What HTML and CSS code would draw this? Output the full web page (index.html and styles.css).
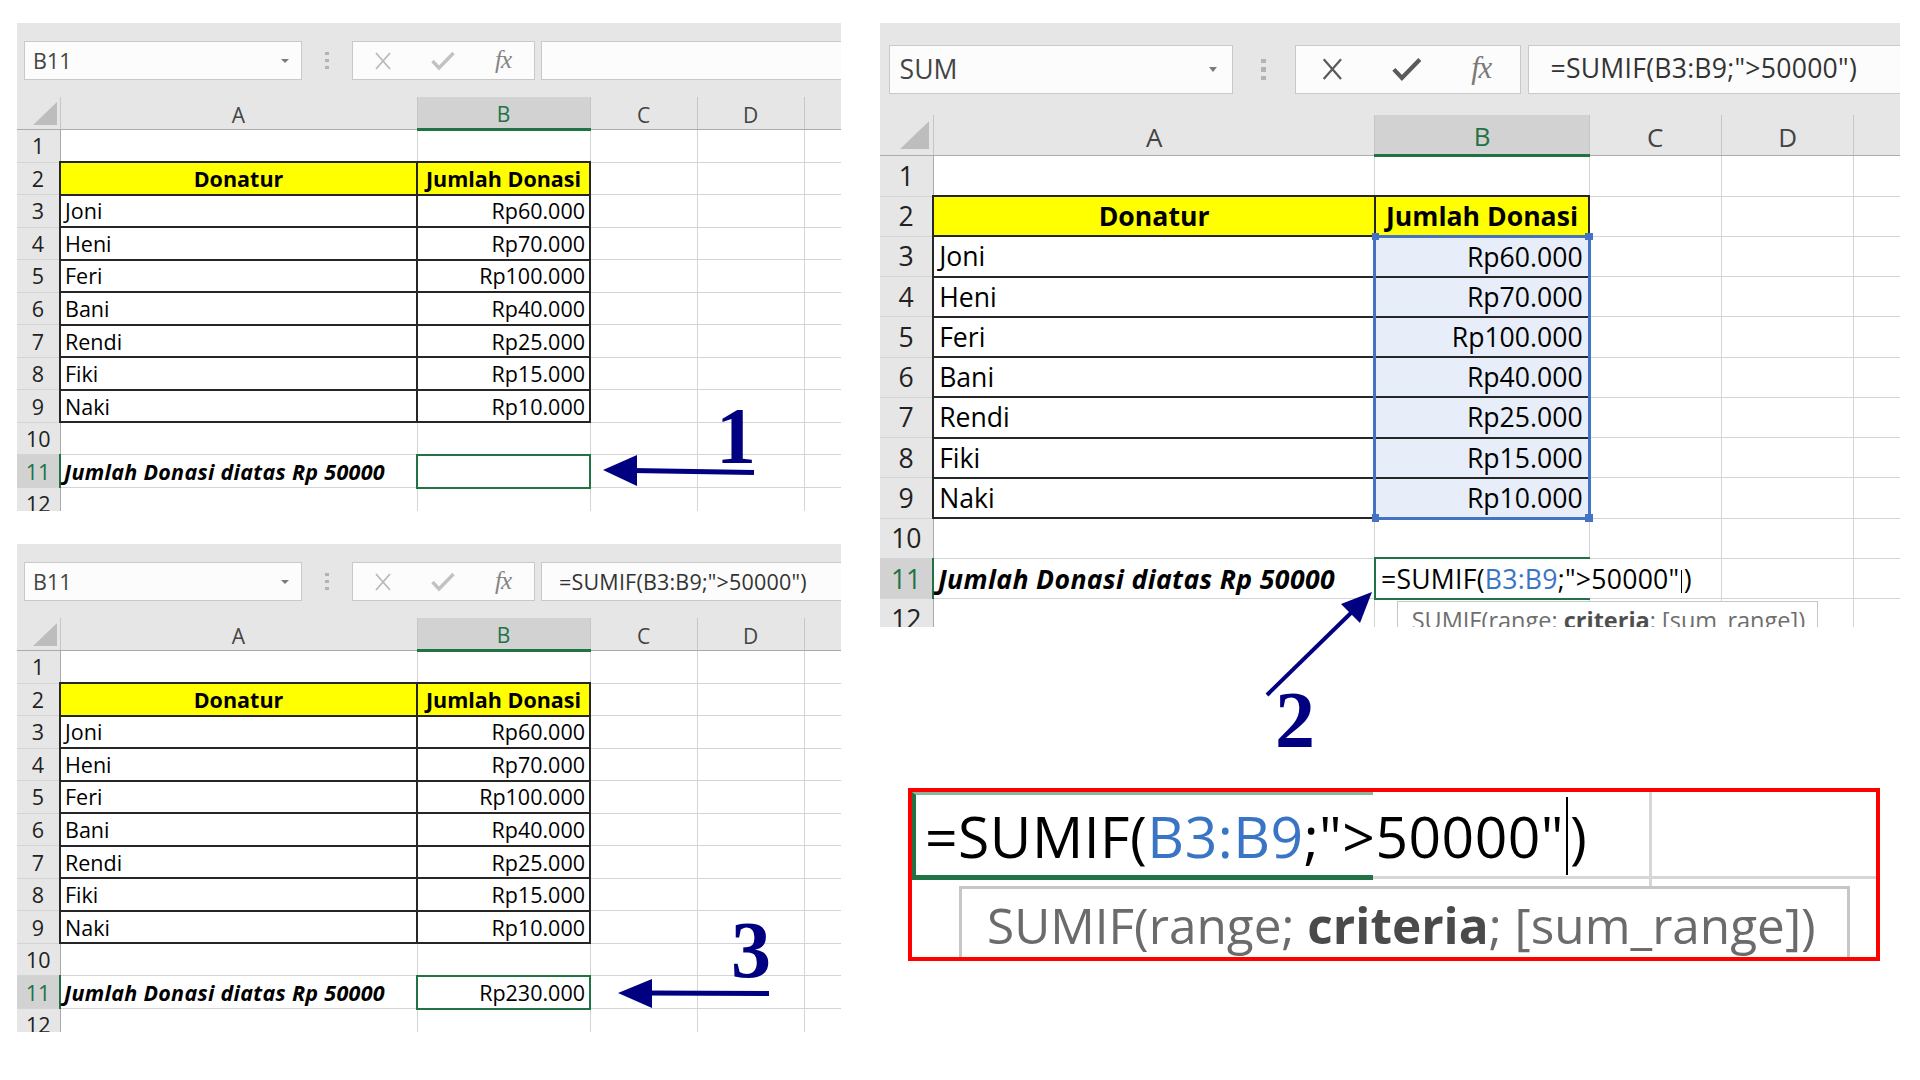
FILE: index.html
```html
<!DOCTYPE html>
<html lang="id">
<head>
<meta charset="utf-8">
<title>SUMIF Excel</title>
<link rel="stylesheet" href="styles.css">
</head>
<body>
<div class="page">
  <div class="col-left">
    <!-- Panel 1 -->
    <div class="sheet">
      <div class="toolbar">
        <div class="namebox"><span>B11</span><i class="dd"></i></div>
        <div class="sep"><i></i><i></i><i></i></div>
        <div class="fxbox">
          <span class="ic"><svg class="x" width="20" height="18" viewBox="0 0 20 18"><path d="M3 1L17 17M17 1L3 17"/></svg></span>
          <span class="ic"><svg class="ok" width="24" height="20" viewBox="0 0 24 20"><path d="M1.5 10L8 17L22.5 2"/></svg></span>
          <span class="ic fx">fx</span>
        </div>
        <div class="fbar"></div>
      </div>
      <table class="grid">
        <colgroup><col class="c0"><col class="ca"><col class="cb"><col class="cc"><col class="cd"><col class="ce"></colgroup>
        <tr class="hd"><th class="corner"><i></i></th><th>A</th><th class="on">B</th><th>C</th><th>D</th><th></th></tr>
        <tr class="r"><th class="rh">1</th><td></td><td></td><td></td><td></td><td></td></tr>
        <tr class="r"><th class="rh">2</th><td class="t y">Donatur</td><td class="t y">Jumlah Donasi</td><td></td><td></td><td></td></tr>
        <tr class="r"><th class="rh">3</th><td class="t">Joni</td><td class="t n">Rp60.000</td><td></td><td></td><td></td></tr>
        <tr class="r"><th class="rh">4</th><td class="t">Heni</td><td class="t n">Rp70.000</td><td></td><td></td><td></td></tr>
        <tr class="r"><th class="rh">5</th><td class="t">Feri</td><td class="t n">Rp100.000</td><td></td><td></td><td></td></tr>
        <tr class="r"><th class="rh">6</th><td class="t">Bani</td><td class="t n">Rp40.000</td><td></td><td></td><td></td></tr>
        <tr class="r"><th class="rh">7</th><td class="t">Rendi</td><td class="t n">Rp25.000</td><td></td><td></td><td></td></tr>
        <tr class="r"><th class="rh">8</th><td class="t">Fiki</td><td class="t n">Rp15.000</td><td></td><td></td><td></td></tr>
        <tr class="r"><th class="rh">9</th><td class="t">Naki</td><td class="t n">Rp10.000</td><td></td><td></td><td></td></tr>
        <tr class="r"><th class="rh">10</th><td></td><td></td><td></td><td></td><td></td></tr>
        <tr class="r"><th class="rh on">11</th><td class="bi">Jumlah Donasi diatas Rp 50000</td><td class="cur n"></td><td></td><td></td><td></td></tr>
        <tr class="r"><th class="rh">12</th><td></td><td></td><td></td><td></td><td></td></tr>
      </table>
    </div>

    <!-- Panel 2 -->
    <div class="sheet">
      <div class="toolbar">
        <div class="namebox"><span>B11</span><i class="dd"></i></div>
        <div class="sep"><i></i><i></i><i></i></div>
        <div class="fxbox">
          <span class="ic"><svg class="x" width="20" height="18" viewBox="0 0 20 18"><path d="M3 1L17 17M17 1L3 17"/></svg></span>
          <span class="ic"><svg class="ok" width="24" height="20" viewBox="0 0 24 20"><path d="M1.5 10L8 17L22.5 2"/></svg></span>
          <span class="ic fx">fx</span>
        </div>
        <div class="fbar">=SUMIF(B3:B9;"&gt;50000")</div>
      </div>
      <table class="grid">
        <colgroup><col class="c0"><col class="ca"><col class="cb"><col class="cc"><col class="cd"><col class="ce"></colgroup>
        <tr class="hd"><th class="corner"><i></i></th><th>A</th><th class="on">B</th><th>C</th><th>D</th><th></th></tr>
        <tr class="r"><th class="rh">1</th><td></td><td></td><td></td><td></td><td></td></tr>
        <tr class="r"><th class="rh">2</th><td class="t y">Donatur</td><td class="t y">Jumlah Donasi</td><td></td><td></td><td></td></tr>
        <tr class="r"><th class="rh">3</th><td class="t">Joni</td><td class="t n">Rp60.000</td><td></td><td></td><td></td></tr>
        <tr class="r"><th class="rh">4</th><td class="t">Heni</td><td class="t n">Rp70.000</td><td></td><td></td><td></td></tr>
        <tr class="r"><th class="rh">5</th><td class="t">Feri</td><td class="t n">Rp100.000</td><td></td><td></td><td></td></tr>
        <tr class="r"><th class="rh">6</th><td class="t">Bani</td><td class="t n">Rp40.000</td><td></td><td></td><td></td></tr>
        <tr class="r"><th class="rh">7</th><td class="t">Rendi</td><td class="t n">Rp25.000</td><td></td><td></td><td></td></tr>
        <tr class="r"><th class="rh">8</th><td class="t">Fiki</td><td class="t n">Rp15.000</td><td></td><td></td><td></td></tr>
        <tr class="r"><th class="rh">9</th><td class="t">Naki</td><td class="t n">Rp10.000</td><td></td><td></td><td></td></tr>
        <tr class="r"><th class="rh">10</th><td></td><td></td><td></td><td></td><td></td></tr>
        <tr class="r"><th class="rh on">11</th><td class="bi">Jumlah Donasi diatas Rp 50000</td><td class="cur n">Rp230.000</td><td></td><td></td><td></td></tr>
        <tr class="r"><th class="rh">12</th><td></td><td></td><td></td><td></td><td></td></tr>
      </table>
    </div>
  </div>

  <div class="col-right">
    <!-- Panel 3 -->
    <div class="sheet big active">
      <div class="toolbar">
        <div class="namebox"><span>SUM</span><i class="dd"></i></div>
        <div class="sep"><i></i><i></i><i></i></div>
        <div class="fxbox">
          <span class="ic"><svg class="x" width="20" height="18" viewBox="0 0 20 18"><path d="M3 1L17 17M17 1L3 17"/></svg></span>
          <span class="ic"><svg class="ok" width="24" height="20" viewBox="0 0 24 20"><path d="M1.5 10L8 17L22.5 2"/></svg></span>
          <span class="ic fx">fx</span>
        </div>
        <div class="fbar">=SUMIF(B3:B9;"&gt;50000")</div>
      </div>
      <table class="grid">
        <colgroup><col class="c0"><col class="ca"><col class="cb"><col class="cc"><col class="cd"><col class="ce"></colgroup>
        <tr class="hd"><th class="corner"><i></i></th><th>A</th><th class="on">B</th><th>C</th><th>D</th><th></th></tr>
        <tr class="r"><th class="rh">1</th><td></td><td></td><td></td><td></td><td></td></tr>
        <tr class="r"><th class="rh">2</th><td class="t y">Donatur</td><td class="t y">Jumlah Donasi</td><td></td><td></td><td></td></tr>
        <tr class="r"><th class="rh">3</th><td class="t">Joni</td><td class="t n sel top">Rp60.000</td><td></td><td></td><td></td></tr>
        <tr class="r"><th class="rh">4</th><td class="t">Heni</td><td class="t n sel">Rp70.000</td><td></td><td></td><td></td></tr>
        <tr class="r"><th class="rh">5</th><td class="t">Feri</td><td class="t n sel">Rp100.000</td><td></td><td></td><td></td></tr>
        <tr class="r"><th class="rh">6</th><td class="t">Bani</td><td class="t n sel">Rp40.000</td><td></td><td></td><td></td></tr>
        <tr class="r"><th class="rh">7</th><td class="t">Rendi</td><td class="t n sel">Rp25.000</td><td></td><td></td><td></td></tr>
        <tr class="r"><th class="rh">8</th><td class="t">Fiki</td><td class="t n sel">Rp15.000</td><td></td><td></td><td></td></tr>
        <tr class="r"><th class="rh">9</th><td class="t">Naki</td><td class="t n sel bot">Rp10.000</td><td></td><td></td><td></td></tr>
        <tr class="r"><th class="rh">10</th><td></td><td></td><td></td><td></td><td></td></tr>
        <tr class="r"><th class="rh on">11</th><td class="bi">Jumlah Donasi diatas Rp 50000</td><td class="edit">=SUMIF(<span class="ref">B3:B9</span>;"&gt;50000"<i class="caret"></i>)<div class="tip">SUMIF(range; <b>criteria</b>; [sum_range])</div></td><td></td><td></td><td></td></tr>
        <tr class="r"><th class="rh">12</th><td></td><td></td><td></td><td></td><td></td></tr>
      </table>
    </div>

    <!-- Magnified view -->
    <div class="zoombox">
      <div class="zrow">
        <div class="zcell">=SUMIF(<span class="ref">B3:B9</span>;"&gt;50000"<i class="zcaret"></i>)</div>
        <div class="zrest"><div class="zgrid"></div></div>
      </div>
      <div class="ztip">SUMIF(range; <b>criteria</b>; [sum_range])</div>
    </div>
  </div>

  <svg class="arrows" width="1920" height="1080" viewBox="0 0 1920 1080">
    <g stroke="#000080" fill="none">
      <line x1="632" y1="470.5" x2="754" y2="472.5" stroke-width="5"/>
      <line x1="648" y1="993" x2="769" y2="993.5" stroke-width="5"/>
      <line x1="1267" y1="695" x2="1354" y2="610" stroke-width="4"/>
    </g>
    <g fill="#000080">
      <polygon points="603,470 637,455 637,486"/>
      <polygon points="618,993 652,979 652,1008"/>
      <polygon points="1372,592 1341,604 1360,623"/>
    </g>
  </svg>
  <span class="num n1">1</span>
  <span class="num n2">2</span>
  <span class="num n3">3</span>
</div>
</body>
</html>
```

FILE: styles.css
```css
* { box-sizing: border-box; }
html, body { margin: 0; padding: 0; background: #fff; }

.page {
  position: relative;
  width: 1920px;
  height: 1080px;
  overflow: hidden;
  display: flex;
  align-items: flex-start;
  gap: 39px;
  padding: 23px 0 0 17px;
  font-family: "Open Sans", "Noto Sans", sans-serif;
  color: #000;
}

.col-left { display: flex; flex-direction: column; gap: 33px; width: 824px; }
.col-right { display: flex; flex-direction: column; width: 1020px; }

/* ---------- sheet panel ---------- */
.sheet { width: 824px; height: 488px; overflow: hidden; background: #fff; }
.sheet.big { zoom: 1.2375; }

.toolbar {
  height: 74px;
  background: #e6e6e6;
  display: flex;
  align-items: flex-start;
  padding: 18px 0 0 7px;
}
.namebox {
  flex: none;
  width: 278px; height: 39px;
  background: #fcfcfc;
  border: 1px solid #c9c9c9;
  display: flex; align-items: center; justify-content: space-between;
  padding: 0 12px 0 8px;
  font-size: 21.5px; color: #444;
}
.dd {
  width: 0; height: 0;
  border-left: 4px solid transparent;
  border-right: 4px solid transparent;
  border-top: 4.5px solid #7a7a7a;
}
.sep {
  flex: none; width: 50px; height: 39px;
  display: flex; flex-direction: column; align-items: center; justify-content: center; gap: 3.5px;
}
.sep i { width: 3.5px; height: 3.5px; background: #b3b3b3; }
.fxbox {
  flex: none;
  width: 183px; height: 39px;
  background: #fcfcfc;
  border: 1px solid #c9c9c9;
  display: flex; align-items: center;
}
.ic { width: 60px; height: 37px; display: flex; align-items: center; justify-content: center; }
.ic svg { fill: none; stroke-linecap: butt; stroke-linejoin: miter; }
.ic .x { stroke: #b9b9b9; stroke-width: 1.8; }
.ic .ok { stroke: #c2c2c2; stroke-width: 3.4; }
.ic.fx {
  font-family: "Liberation Serif", "Times New Roman", serif;
  font-style: italic; font-size: 25px; color: #858585;
  letter-spacing: -1px; padding-bottom: 2px;
}
.active .ic .x { stroke: #5a5a5a; }
.active .ic .ok { stroke: #5a5a5a; }
.active .ic.fx { color: #7a7a7a; }
.fbar {
  flex: none;
  width: 330px; height: 39px;
  margin-left: 6px;
  background: #fcfcfc;
  border: 1px solid #c9c9c9;
  padding-left: 17px;
  font-size: 21.5px; line-height: 37px; color: #333;
  white-space: nowrap;
  letter-spacing: 0.2px;
}

/* ---------- grid ---------- */
.grid {
  border-collapse: collapse;
  table-layout: fixed;
  width: 894px;
  font-size: 21.5px;
  color: #000;
}
.grid col.c0 { width: 43px; }
.grid col.ca { width: 357px; }
.grid col.cb { width: 173px; }
.grid col.cc { width: 107px; }
.grid col.cd { width: 107px; }
.grid col.ce { width: 107px; }

.grid th {
  background: #e6e6e6;
  font-weight: 400;
  color: #444;
  padding: 0;
  font-size: 21px;
  text-align: center;
  vertical-align: middle;
}
.grid tr.hd { height: 31px; }
.grid tr.hd th {
  border-bottom: 1px solid #ababab;
  border-right: 1px solid #c6c6c6;
  padding-top: 3px;
}
.grid tr.hd th.on {
  background: #d2d2d2;
  color: #217346;
  border-bottom: 3px solid #217346;
}
.grid th.corner { position: relative; border-right: 1px solid #ababab; }
.grid th.corner i {
  position: absolute; left: 16px; top: 5px;
  width: 24px; height: 23px;
  background: #bdbdbd;
  clip-path: polygon(100% 0, 100% 100%, 0 100%);
}
.grid th.rh {
  border-right: 1px solid #ababab;
  border-bottom: 1px solid #d4d4d4;
  color: #222;
  font-size: 21.5px;
}
.grid th.rh.on {
  background: #d2d2d2;
  color: #217346;
  border-right: 2px solid #217346;
}

.grid tr.r { height: 32.55px; }
.grid td {
  border: 1px solid #d4d4d4;
  padding: 0 4px;
  white-space: nowrap;
  vertical-align: middle;
}
.grid td.t { border: 2px solid #262626; }
.grid td.y { background: #ffff00; font-weight: 700; text-align: center; }
.grid td.n { text-align: right; }
.grid td.bi { font-weight: 700; font-style: italic; padding-left: 3px; letter-spacing: 0.3px; }
.grid td.cur { border: 2px solid #217346; }

.grid td.sel {
  background: #e8eef9;
  border-left: 2.5px solid #4472c4;
  border-right: 2.5px solid #4472c4;
}
.grid td.sel.top { border-top: 2.5px solid #4472c4; position: relative; }
.grid td.sel.bot { border-bottom: 2.5px solid #4472c4; position: relative; }
.grid td.sel.top::before, .grid td.sel.top::after,
.grid td.sel.bot::before, .grid td.sel.bot::after {
  content: "";
  position: absolute;
  width: 6px; height: 6px;
  background: #4472c4;
}
.grid td.sel.top::before { left: -4px; top: -4px; }
.grid td.sel.top::after { right: -4px; top: -4px; }
.grid td.sel.bot::before { left: -4px; bottom: -4px; }
.grid td.sel.bot::after { right: -4px; bottom: -4px; }

.grid td.edit {
  position: relative;
  border-top: 2px solid #217346;
  border-bottom: 2px solid #217346;
  border-left: 2px solid #217346;
  border-right-style: hidden;
  color: #000;
  letter-spacing: 0.2px;
}
.ref { color: #3a75c5; }
.caret {
  display: inline-block;
  width: 1.5px; height: 19px;
  background: #000;
  vertical-align: -4px;
  margin: 0 1px;
}
.tip {
  position: absolute;
  left: 17px; top: calc(100% + 3px);
  width: 340px; height: 40px;
  background: #fff;
  border: 1px solid #c6c6c6;
  padding: 1px 0 0 11px;
  font-size: 19px; line-height: 26px;
  color: #6e6e6e;
  font-weight: 400; font-style: normal;
  letter-spacing: 0;
  white-space: nowrap;
}
.tip b { color: #4f4f4f; font-weight: 700; }

/* ---------- magnified box ---------- */
.zoombox {
  margin: 161px 0 0 28px;
  width: 972px; height: 173px;
  border: 4px solid #ff0000;
  background: #fff;
  overflow: hidden;
}
.zrow { display: flex; height: 94px; }
.zcell {
  flex: none;
  width: 461px; height: 88px;
  border-top: 3px solid #8db59c;
  border-left: 4px solid #217346;
  border-bottom: 5px solid #217346;
  padding: 2px 0 0 9px;
  font-size: 57px; line-height: 76px;
  letter-spacing: 0.5px;
  white-space: nowrap;
  color: #000;
  position: relative;
  z-index: 1;
}
.zcaret {
  display: inline-block;
  width: 2px; height: 78px;
  background: #000;
  vertical-align: -17px;
  margin: 0 2px;
}
.zrest {
  flex: 1;
  height: 87px;
  border-bottom: 3px solid #d6d6d6;
}
.zgrid {
  width: 279px; height: 94px;
  border-right: 3px solid #d6d6d6;
}
.ztip {
  margin-left: 47px;
  width: 891px; height: 90px;
  border: 3px solid #c6c6c6;
  padding: 1px 0 0 25px;
  font-size: 49.5px; line-height: 70px;
  color: #6b6b6b;
  white-space: nowrap;
}
.ztip b { color: #4a4a4a; font-weight: 700; }

/* ---------- annotations ---------- */
.arrows { position: absolute; left: 0; top: 0; pointer-events: none; }
.num {
  position: absolute;
  font-family: "Liberation Serif", "Times New Roman", serif;
  font-weight: 700;
  font-size: 80px;
  line-height: 1;
  color: #000080;
}
.n1 { left: 716px; top: 396px; }
.n2 { left: 1275px; top: 680px; }
.n3 { left: 731px; top: 910px; }
```
